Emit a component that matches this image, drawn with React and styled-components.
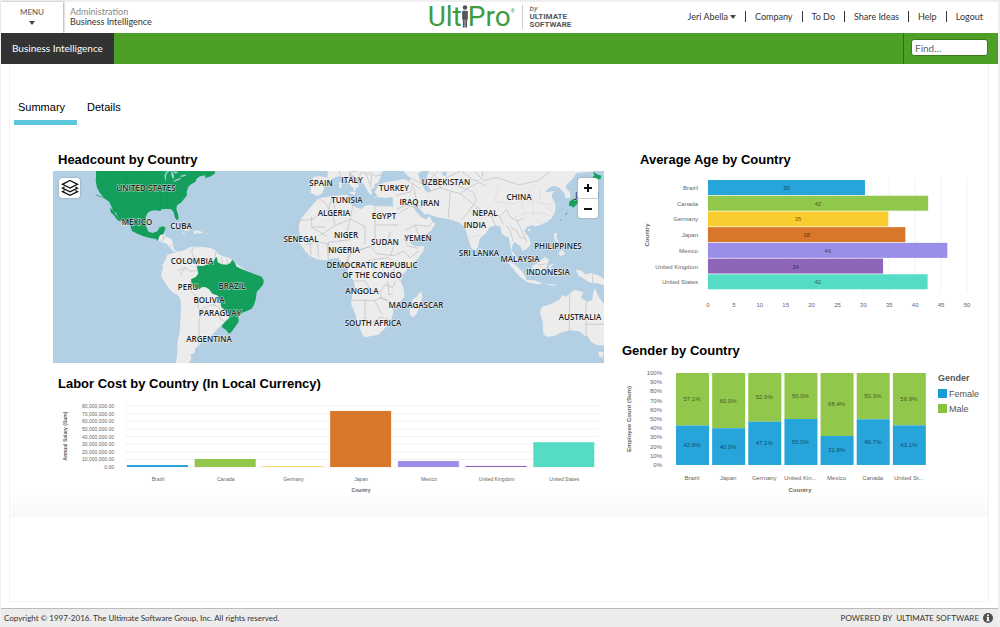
import React, { useState } from "react";
import styled, { createGlobalStyle } from "styled-components";

const COUNTRIES = [
  { name: "Brazil", color: "#27a5db", age: 30.3, ageLabel: "30", cost: 2.6 },
  { name: "Canada", color: "#91c84b", age: 42.5, ageLabel: "42", cost: 10.5 },
  { name: "Germany", color: "#f9cd2f", age: 34.8, ageLabel: "35", cost: 0.9 },
  { name: "Japan", color: "#d8772a", age: 38.1, ageLabel: "38", cost: 73.5 },
  { name: "Mexico", color: "#998fe8", age: 46.2, ageLabel: "46", cost: 7.8 },
  { name: "United Kingdom", color: "#8d66ba", age: 33.8, ageLabel: "34", cost: 1.4 },
  { name: "United States", color: "#54dcc4", age: 42.4, ageLabel: "42", cost: 32.5 },
];

const GENDER = [
  { name: "Brazil", male: 57.1, female: 42.9 },
  { name: "Japan", male: 60.0, female: 40.0 },
  { name: "Germany", male: 52.9, female: 47.1 },
  { name: "United Kin...", male: 50.0, female: 50.0 },
  { name: "Mexico", male: 68.4, female: 31.6 },
  { name: "Canada", male: 50.3, female: 49.7 },
  { name: "United St...", male: 56.9, female: 43.1 },
];

const LINKS = ["Company", "To Do", "Share Ideas", "Help", "Logout"];

const MAP_LABELS = [
  ["UNITED STATES", 93, 20],
  ["MEXICO", 84, 54],
  ["CUBA", 128, 58],
  ["COLOMBIA", 139, 93],
  ["PERU", 135, 119],
  ["BRAZIL", 179, 118],
  ["BOLIVIA", 156, 132],
  ["PARAGUAY", 167, 145],
  ["ARGENTINA", 156, 171],
  ["SPAIN", 268, 15],
  ["ITALY", 299, 12],
  ["TURKEY", 341, 20],
  ["UZBEKISTAN", 393, 14],
  ["CHINA", 466, 29],
  ["TUNISIA", 294, 32],
  ["IRAQ", 356, 34],
  ["IRAN", 377, 35],
  ["ALGERIA", 281, 45],
  ["EGYPT", 331, 48],
  ["NEPAL", 432, 45],
  ["INDIA", 422, 57],
  ["SENEGAL", 248, 71],
  ["NIGER", 293, 67],
  ["SUDAN", 332, 74],
  ["YEMEN", 365, 70],
  ["NIGERIA", 291, 82],
  ["SRI LANKA", 426, 85],
  ["PHILIPPINES", 505, 78],
  ["MALAYSIA", 467, 91],
  ["INDONESIA", 495, 104],
  ["DEMOCRATIC REPUBLIC", 319, 97],
  ["OF THE CONGO", 319, 107],
  ["ANGOLA", 309, 123],
  ["MADAGASCAR", 363, 137],
  ["SOUTH AFRICA", 320, 155],
  ["AUSTRALIA", 527, 149],
  ["JAPAN", 534, 27],
];

const Logo = () => (
  <Brand>
    <Wordmark>
      Ult
      <svg width="6" height="23" viewBox="0 0 6 24" aria-hidden="true">
        <circle cx="3" cy="2.6" r="2.4" fill="#55565a" />
        <path
          d="M1 6h4a1 1 0 0 1 1 1v8h-.8v8.500H3.300V15h-.6v8.500H.8V15H0V7a1 1 0 0 1 1-1z"
          fill="#55565a"
        />
      </svg>
      Pro
      <Registered>®</Registered>
    </Wordmark>
    <Byline>
      <em>by</em>
      <b>ULTIMATE</b>
      <b>SOFTWARE</b>
    </Byline>
  </Brand>
);

const WorldMap = () => {
  const [zoom, setZoom] = useState(1);

  return (
    <MapFrame>
      <MapSvg viewBox="0 0 551 192" role="img" aria-label="Headcount map">
        <g transform={`translate(275 96) scale(${zoom}) translate(-275 -96)`}>
          <g transform="scale(.33333) translate(-9 -78)">
            <Land d="M405 315l10-7 17-5 8 5 10-3 30 3 17 8 8 12 15 6 20 6 12 12 60 40-30 90-60 50-34 36-8 8-10 2-15 10-7 15-13 7-1 13-14 7 5 10-10 15-10 12h-33l7-18 2-20 2-40 6-28 3-52 1-40-6-15-23-15-15-20-12-18-4-14 6-18-2-10 10-15 5-15z" />
            <Land d="M323 286l4-18 16-2 4 9 18 6 4 19 3 14 13 6 13-3 8 7-7 3-13-3-14-4-14-13-8-11-18-6z" />
            <Land d="M355 237l14 0 18 6 22 9 16 4-20 1-12-7-24-8zM431 258l10-2 19 6-8 3-20 2zM397 262l10 2-6 3zM466 263l8 1-4 2z" />
            <Active d="M138 72v22l-1 12 4 22 9 17 13 15 14 10 5 10 9 20 8 4 4 12 9 8-1 6-11-7-8-12-9-8-4-15 8 6 14 18 11 14 18 8 11 8 5 16 16 8 18 8 20 5 18 3 5 6 7-18 10-2 7-20-7-4-11 3-7 12-14 5-12-4-6-10-3-16v-17l5-12 9-7 14-2 16 2 4-5 14-1 15 1 7 9 4 16 6 8 5-3-2-15-5-15 2-12 12-8 12-15 6-7-1-10 5-16 9-8 12-6 4-10 10-7 16-3-1 9 18-6 12-9v-6z" />
            <Active d="M440 362l20 1 18-8 12-5 6-12 5-1 2 15 12 6 15 1 10-4 7-11 8 10 5 11 15 7 20 8 20 8 20 7 6 10-1 13-10 12-10 12-2 18-6 20-8 12-14 6-15 6-10 11 1 15-10 15-12 16-7 5-8-10-12-9-2-4 12-14 12-11-5-12-7-7-13-13-3-15-10-20-14-5-10-13-10-6-10-1-10 7-10-2-13-18-1-10 14-7 8-10-3-13z" />
            <Border d="M432 303l-7 15 5 18 13 8 1 22M384 376l22-8 14 10 20 0M406 368l-16 22M424 412l-8 20 22 22 8 14-2 20 10 8-8 40 2 50-8 50-1 40M502 450l-4 25-20 8-24 8M488 480l16 4 10 12 16 18M512 498l-2 24 14 6M498 316l-2 20M515 336l2 20M530 340l2 17M335 268l6 12-8 8M345 275l-8 12M366 300l-8 5M443 260l-1 8" />
            <DarkBorder d="M138 150l34 12 30 4 16 12 18 8 14 18 20 8 18 6M178 78l-2 70M230 78l2 84M280 78l6 80M172 110h150M330 100l6 92M350 110l4 80M370 112l2 60" />
            <Lake d="M352 82q-8 10-5 24l-3-14 6-12 8-2 4-2M364 79q10 8 6 22l-4-8zM371 109q12-2 22-9-10 1-22 9zM392 94q10-5 16-4-6 5-16 4zM370 80l14 2-8 3z" />
          </g>
          <g transform="scale(.33333) translate(816 -78)">
            <Land d="M-20 160l20-3 22-5 46-3 4 12-4 12 12 6 16 9 14 4 8-9 17-4 20 5h45l8 6 4 18 10 17 6 20 10 15 4 18 13 14 7 8 18 5 18-3-2 14-16 24-18 20-18 16-12 15-4 20 8 20 2 25-18 20-15 10v15l-5 20-10 15-15 20-15 13-20 4-22 4-8-11-6-20-9-25-7-20-10-25 4-25 8-25-4-17-11-16-7-12 2-18-6-12H50l-10-12-20 2-20 5-25-3-20-10-15-15-10-15-10-15 5-15-5-30 10-25 25-30z" />
            <Land d="M288 438l4 17-7 25-9 25-10 11-10-4-2-17 8-15v-15l13-10z" />
            <Land d="M-35 95l20-1 23 4V72h168l-6 13-5 15-5 12-10 6-2 10-10 4 4 13-7 5-9-15-8-15-13-15-20-13-13-10v10l13 13 10 10 9 7-10 8-6 10-4 0 3-8-7-7-10-12-15-15-12-5-18 6-10 9-15 12-8 25-15 8-10-5-10-4 1-24zM75 140l17 2-3 8-14-5zM42 112l8 0v16l-7 3zM146 155l14 2-12 2z" />
            <Land d="M163 118l17-6 25-4 20-4 15-2 12 6 6-8-13-10-10-12V72h575v8l-55 4-15 20-15 15-3 10 13 12 1 17-14 2-4-15-8-10-10-8-14-5-14 7-12 12 12-1 18-2-10 10 2 12 10 20-2 20-10 20-15 12-20 8-15 5-8-5-16 6-8 12 13 18 7 20-12 15-14 8-4-13-12-10-8-6-6 12-2 14 9 12 12 20-8-2-12-20-6-25-4-25-12-3-10-10-2-17-13-5-20 5-10 17-20 18-5 25-10 13-10-10-8-23-7-25-5-15-15-13-30-10-25-4-25-6-14-6-11 1-15-16-15-16-5 6 10 19 14 15 16 7 10-10 5 13 12 10-12 20-20 15-25 12-23 10-10-12-10-25-12-20-12-27-2-16-2-17 1-15-7-5-18 3-20-3-10-15z" />
            <Land d="M465 308l8 9-6 10-4-6zM608 255l10-4-4 9zM686 265l9-2-1 16 8 12-12-3zM704 318l10-3 6 12-12 6-8-6zM700 296l8 2-2 8-5-4zM676 315l12-14-8 14zM540 342l16 6 18 14 18 18 12 20-3 8-18-14-20-24zM600 404l28 2 24 8-10 4-36-6zM622 362l18-9 20-18 12 10-7 20-10 20-24 2-9-14zM672 360l18-3-14 8 8 16-8-8-4 14zM658 416l20 1 18 3-12 2zM752 375l16 1 12 12 18-4 28 10 20 14v17l-28-10-22-2-20-12-14-8z" />
            <Land d="M648 490l8-6 24-8 22-11 10-14 12 4 11-12 14-9 26 8-7 16 18 12 15-4 4-24 5-12 8 20 9 14 12 16v122l-24-2-18-10-8-16-11-2-15-13-30-3-26 7-20 11-22 1-10-8-2-38-8-26zM820 620l16 2-4 16-10-6z" />
            <Active d="M804 79l12 9 13 4-2 9-12 3-13-8 6-4zM733 170l14-10 12 2-2 14-12 12-5-4-8-2zM800 106l6 20-10 26-30 14-6-6 20-14 14-20zM721 208l8-8-6 10zM705 226l5-3-4 5z" />
            <Water d="M279 86l14-9h20l-8 18 3 26 10 14-6 8-13-8-8-18-8-18zM352 80l14 2-4 12-10-4zM470 76l5 10-3 12z" />
            <Border d="M-20 160l20 12 12 20-52 32-40 2v22h-12M-40 216v30h42M-40 246l46 28M12 192l8-38M20 152l10 40-6 20 6 30 46-20 8-44M30 242l-46 30M76 222l44 22v54M76 222l-10 38 10 24-66 8 4 42M150 184v56h70M150 240v40l-12 24-60 18-14 30M66 352l10-28 60-20 20 22 50 6 30-14 20 20 26-20M196 260l-6 24 16 20-10 30M236 280l12 22 30 8M-60 300l40-10 26 6 4 46M-44 286l2 44M-22 290l2 50M70 362l40 6 20-22 60-8 20 16-6 36 32 24M80 408h40l20 30h28l14-20 20 10 10-20M82 466h70l16-10 20 10M120 468v50l-20 24M120 518l20 16 28-18 26 10M150 468l20 38M168 440l-2 20 30 10 8 24M188 410l4 40 12-4" />
            <Border d="M10 100l-14 40M48 92l-6-14M72 82l24-4M100 100l10-20 14 8 10 28M120 82l20 10-4 34M134 80l18 14 20-6M240 102l24 14-6 24-44 12M258 100l40 20M264 116l24 18M266 128l12 50 14 12M216 192l30-12 30 10M220 206l30-18M240 256l30-16 42 4 14-18M270 240l14 40M318 100l22-22M312 140l34-12 30 10-6 80M318 106l30 22M320 82l40 40 30-4 30 14 44-20 20 12M376 138l30 8 20-14 20 10 8 24-24 36-20 20M346 128l18-30 40-18M412 80l30 24 20 4M450 82l26 24 40-8 66 22 60-14 30-26M406 146l20 16 24 20 34 24 38 4 12 28M452 190l30 22 32 4M500 218l14 26M530 210l14-16 14 24 20 10 20-8M544 240l12 18 8 30M556 246l20 12 6 18 16 4M576 228l20 40 10 24M734 442l-1 116M783 470v104M783 538h55M803 386v28M640 360l24-4" />
            <PaleBorder d="M560 132l20 20 30-10 24-22M560 178l40-14 40 10 46 6M590 176l8 30-26 10M620 150l6 60 20 26M646 130l-2 40 40 30M600 206l50-2 30 10M520 120l-10 50 50 8M430 200l40 20M432 250l36-14M426 280l40-10" />
          </g>
          {MAP_LABELS.map(([label, x, y]) => (
            <MapLabel key={label} x={x} y={y}>
              {label}
            </MapLabel>
          ))}
        </g>
      </MapSvg>
      <LayersButton type="button" aria-label="Layers">
        <svg width="18" height="18" viewBox="0 0 18 18" fill="none" stroke="#111">
          <path d="M9 1.500l7.500 3.800L9 9 1.500 5.300z" strokeWidth="1.300" />
          <path d="M3.500 8L1.500 9.100 9 12.800l7.500-3.700-2-1.100" strokeWidth="1.300" />
          <path d="M3.500 11.500l-2 1.100L9 16.300l7.500-3.700-2-1.100" strokeWidth="1.300" />
        </svg>
      </LayersButton>
      <ZoomControl>
        <ZoomButton
          type="button"
          aria-label="Zoom in"
          onClick={() => setZoom((z) => Math.min(z * 2, 8))}
        >
          <svg width="8" height="8" viewBox="0 0 8 8" stroke="#111" strokeWidth="2">
            <path d="M0 4h8M4 0v8" />
          </svg>
        </ZoomButton>
        <ZoomButton
          type="button"
          aria-label="Zoom out"
          onClick={() => setZoom((z) => Math.max(z / 2, 1))}
        >
          <svg width="8" height="8" viewBox="0 0 8 8" stroke="#111" strokeWidth="2">
            <path d="M0 4h8" />
          </svg>
        </ZoomButton>
      </ZoomControl>
    </MapFrame>
  );
};

const LaborCostChart = () => {
  const base = 72;
  const scale = 61 / 80;
  const step = 474 / 7;

  return (
    <ChartSvg viewBox="0 0 551 102" role="img" aria-label="Labor cost">
      <AxisTitle $small transform="translate(14 41) rotate(-90)">
        Annual Salary (Sum)
      </AxisTitle>
      {[0, 10, 20, 30, 40, 50, 60, 70, 80].map((tick) => (
        <g key={tick}>
          <GridLine x1="72" x2="545" y1={base - tick * scale} y2={base - tick * scale} />
          <Tick $small $end x="61" y={base + 2 - tick * scale}>
            {tick ? `${tick},000,000.00` : "0.00"}
          </Tick>
        </g>
      ))}
      {COUNTRIES.map((c, i) => (
        <g key={c.name}>
          <rect
            x={74 + i * step}
            y={base - c.cost * scale}
            width="61"
            height={c.cost * scale}
            fill={c.color}
          />
          <Tick $small x={105 + i * step} y="86">
            {c.name}
          </Tick>
        </g>
      ))}
      <AxisTitle $small x="308" y="97">
        Country
      </AxisTitle>
    </ChartSvg>
  );
};

const AverageAgeChart = () => {
  const left = 86;
  const scale = 259 / 50;
  const step = 110 / 7;

  return (
    <ChartSvg viewBox="0 0 358 159" role="img" aria-label="Average age">
      <AxisTitle transform="translate(27 64) rotate(-90)">Country</AxisTitle>
      {[0, 5, 10, 15, 20, 25, 30, 35, 40, 45, 50].map((tick) => (
        <g key={tick}>
          <GridLine x1={left + tick * scale} x2={left + tick * scale} y1="7" y2="121" />
          <Tick x={left + tick * scale} y="136">
            {tick}
          </Tick>
        </g>
      ))}
      {COUNTRIES.map((c, i) => (
        <g key={c.name}>
          <rect
            x={left}
            y={9 + i * step}
            width={c.age * scale}
            height="15"
            fill={c.color}
          />
          <Tick $end x="76" y={19 + i * step}>
            {c.name}
          </Tick>
          <Value x={left + (c.age * scale) / 2} y={19 + i * step}>
            {c.ageLabel}
          </Value>
        </g>
      ))}
    </ChartSvg>
  );
};

const GenderChart = () => {
  const top = 11;
  const height = 92;
  const step = 253 / 7;

  return (
    <ChartSvg viewBox="0 0 358 135" role="img" aria-label="Gender split">
      <AxisTitle transform="translate(9 57) rotate(-90)">
        Employee Count (Sum)
      </AxisTitle>
      {[0, 10, 20, 30, 40, 50, 60, 70, 80, 90, 100].map((tick) => (
        <Tick key={tick} $end x="40" y={top + height + 2 - tick * 0.92}>
          {tick}%
        </Tick>
      ))}
      {GENDER.map((g, i) => {
        const split = top + (height * g.male) / 100;
        const x = 54 + i * step;
        return (
          <g key={g.name}>
            <rect x={x} y={top} width="33" height={split - top} fill="#91c84b" />
            <rect x={x} y={split} width="33" height={top + height - split} fill="#27a5db" />
            <Value x={x + 16} y={(top + split) / 2 + 2}>
              {g.male.toFixed(1)}%
            </Value>
            <Value x={x + 16} y={(split + top + height) / 2 + 2}>
              {g.female.toFixed(1)}%
            </Value>
            <Tick x={x + 16} y="118">
              {g.name}
            </Tick>
          </g>
        );
      })}
      <AxisTitle x="178" y="130">
        Country
      </AxisTitle>
      <LegendText $bold x="316" y="19">
        Gender
      </LegendText>
      <rect x="316" y="27" width="9" height="9" fill="#1a9bd4" />
      <LegendText x="327" y="35">
        Female
      </LegendText>
      <rect x="316" y="42" width="9" height="9" fill="#86c440" />
      <LegendText x="327" y="50">
        Male
      </LegendText>
    </ChartSvg>
  );
};

const App = () => {
  const [tab, setTab] = useState("Summary");

  return (
    <>
      <GlobalStyle />
      <Page>
        <Header>
          <HeaderLeft>
            <MenuButton type="button">
              MENU
              <Caret />
            </MenuButton>
            <Breadcrumb>
              <span>Administration</span>
              <strong>Business Intelligence</strong>
            </Breadcrumb>
          </HeaderLeft>
          <Logo />
          <UserNav>
            <UserButton type="button">
              Jeri Abella
              <Caret />
            </UserButton>
            {LINKS.map((link) => (
              <NavLink key={link} href="#">
                {link}
              </NavLink>
            ))}
          </UserNav>
        </Header>
        <NavBar>
          <CurrentPage href="#">Business Intelligence</CurrentPage>
          <SearchBox>
            <SearchInput type="text" aria-label="Find" placeholder="Find..." />
          </SearchBox>
        </NavBar>
        <Panel>
          <Tabs>
            {["Summary", "Details"].map((name) => (
              <Tab
                key={name}
                type="button"
                $active={tab === name}
                onClick={() => setTab(name)}
              >
                {name}
              </Tab>
            ))}
          </Tabs>
          <Dashboard>
            <Column>
              <Card>
                <CardTitle $indent={5}>Headcount by Country</CardTitle>
                <WorldMap />
              </Card>
              <Card>
                <CardTitle $indent={5}>Labor Cost by Country (In Local Currency)</CardTitle>
                <LaborCostChart />
              </Card>
            </Column>
            <Column>
              <Card>
                <CardTitle $indent={18}>Average Age by Country</CardTitle>
                <AverageAgeChart />
              </Card>
              <Card>
                <CardTitle>Gender by Country</CardTitle>
                <GenderChart />
              </Card>
            </Column>
          </Dashboard>
        </Panel>
        <Footer>
          <span>
            Copyright © 1997-2016. The Ultimate Software Group, Inc. All rights reserved.
          </span>
          <Powered>
            POWERED BY&nbsp; ULTIMATE SOFTWARE
            <svg width="10" height="10" viewBox="0 0 10 10" aria-hidden="true">
              <circle cx="5" cy="5" r="5" fill="#4d4d4d" />
              <path d="M4 1.600h2v1.600H4zM3.400 4H6v3.200h.7v1.100H3.400V7.200H4V5.100h-.6z" fill="#eee" />
            </svg>
          </Powered>
        </Footer>
      </Page>
    </>
  );
};

export default App;

const GlobalStyle = createGlobalStyle`
  * {
    box-sizing: border-box;
  }

  body {
    margin: 0;
    background-color: #fff;
    font-family: Lato, "Open Sans", sans-serif;
    color: #333;
  }

  button {
    border: none;
    background: none;
    padding: 0;
    font-family: inherit;
    color: inherit;
    cursor: pointer;
  }

  a {
    color: inherit;
    text-decoration: none;
  }
`;

const Page = styled.div`
  display: flex;
  flex-direction: column;
  min-height: 100vh;
  border: solid #efefef;
  border-width: 2px 2px 0 1px;
`;

const Header = styled.header`
  display: grid;
  grid-template-columns: 1fr auto 1fr;
  height: 31px;
`;

const HeaderLeft = styled.div`
  display: flex;
`;

const MenuButton = styled.button`
  display: flex;
  flex-direction: column;
  align-items: center;
  justify-content: center;
  gap: 4px;
  width: 62px;
  padding-bottom: 2px;
  font-size: 8px;
  line-height: 9px;
  color: #555;
  box-shadow: 1px 0 2px #aaa;
`;

const Caret = styled.span`
  border: 3px solid transparent;
  border-top: 4px solid #444;
  border-bottom: none;
`;

const Breadcrumb = styled.div`
  display: flex;
  flex-direction: column;
  justify-content: center;
  padding: 0 0 2px 7px;
  font-size: 9px;
  line-height: 10px;

  span {
    color: #888;
  }

  strong {
    font-weight: 400;
  }
`;

const Brand = styled.div`
  display: flex;
  align-items: center;
  padding-bottom: 2px;
`;

const Wordmark = styled.div`
  display: flex;
  align-items: center;
  padding-right: 7px;
  font-family: Roboto, sans-serif;
  font-size: 28px;
  line-height: 28px;
  color: #3f9b3f;
`;

const Registered = styled.sup`
  align-self: flex-start;
  font-size: 5px;
  line-height: 16px;
`;

const Byline = styled.div`
  display: flex;
  flex-direction: column;
  padding-left: 7px;
  border-left: 1px solid #ccc;
  font-family: Roboto, sans-serif;
  font-size: 8px;
  line-height: 8px;
  color: #55565a;
`;

const UserNav = styled.nav`
  display: flex;
  align-items: center;
  justify-content: flex-end;
  padding: 0 15px 2px 0;
  font-size: 9px;
  line-height: 11px;
`;

const UserButton = styled.button`
  display: flex;
  align-items: center;
  gap: 2px;
  padding-right: 9px;
  font-size: 9px;
  line-height: 11px;
`;

const NavLink = styled.a`
  padding: 0 9px;
  border-left: 1px solid #333;

  &:last-child {
    padding-right: 0;
  }
`;

const NavBar = styled.div`
  display: flex;
  justify-content: space-between;
  height: 31px;
  background-color: #4e9f27;
`;

const CurrentPage = styled.a`
  display: flex;
  align-items: center;
  padding: 0 11px 2px;
  background-color: #333;
  color: #fff;
  font-size: 10px;
`;

const SearchBox = styled.div`
  display: flex;
  align-items: center;
  padding: 0 10px 2px 7px;
  border-left: 1px solid #2f6e14;
`;

const SearchInput = styled.input`
  width: 77px;
  height: 17px;
  padding: 0 3px;
  border: 1px solid #3b7a1d;
  border-radius: 3px;
  background-color: #fff;
  font-family: inherit;
  font-size: 10px;

  &::placeholder {
    color: #666;
  }
`;

const Panel = styled.main`
  flex: 1;
  margin: 0 9px 6px 8px;
  padding-top: 34px;
  border: 1px solid #f2f2f2;
  border-top: none;
`;

const Tabs = styled.div`
  display: flex;
  gap: 6px;
  padding-left: 4px;
`;

const Tab = styled.button`
  padding: 0 12px 4px 4px;
  border-bottom: 5px solid ${({ $active }) => ($active ? "#5bc8de" : "transparent")};
  font-family: "Liberation Sans", Arial, sans-serif;
  font-size: 11px;
  line-height: 18px;
  color: #000;
`;

const Dashboard = styled.div`
  display: grid;
  grid-template-columns: minmax(0, 551fr) minmax(0, 358fr);
  gap: 18px;
  padding: 27px 8px 20px 43px;
  background: linear-gradient(to top, #f8f8f8, #fff 26px);
`;

const Column = styled.div`
  display: flex;
  flex-direction: column;
  gap: 13px;
`;

const Card = styled.section`
  display: flex;
  flex-direction: column;
  gap: 3px;
`;

const CardTitle = styled.h2`
  margin: 0;
  padding-left: ${({ $indent = 0 }) => $indent}px;
  font-family: "Liberation Sans", Arial, sans-serif;
  font-size: 13px;
  line-height: 16px;
  color: #000;
`;

const MapFrame = styled.div`
  position: relative;
`;

const MapSvg = styled.svg`
  display: block;
  width: 100%;
  overflow: hidden;
  background-color: #b3cfe4;
`;

const Land = styled.path`
  fill: #ececec;
`;

const Active = styled.path`
  fill: #14a05c;
`;

const Water = styled.path`
  fill: #b3cfe4;
`;

const Lake = styled(Water)`
  stroke: #b3cfe4;
  stroke-width: 2px;
`;

const Border = styled.path`
  fill: none;
  stroke: #bdbdc0;
  stroke-width: 2px;
  stroke-linejoin: round;
`;

const PaleBorder = styled(Border)`
  stroke: #d9d9da;
`;

const DarkBorder = styled(Border)`
  stroke: #10965a;
`;

const MapLabel = styled.text`
  font-family: "Open Sans", "Noto Sans", sans-serif;
  font-size: 8px;
  font-weight: 600;
  text-anchor: middle;
  fill: #222;
  stroke: #fff;
  stroke-width: 1px;
  stroke-opacity: 0.7;
  paint-order: stroke;
`;

const LayersButton = styled.button`
  position: absolute;
  top: 7px;
  left: 6px;
  display: flex;
  align-items: center;
  justify-content: center;
  width: 21px;
  height: 20px;
  border-radius: 3px;
  background-color: #fff;
  box-shadow: 0 0 2px #888;
`;

const ZoomControl = styled.div`
  position: absolute;
  top: 7px;
  right: 6px;
  display: flex;
  flex-direction: column;
  border-radius: 3px;
  background-color: #fff;
  box-shadow: 0 0 2px #888;
`;

const ZoomButton = styled.button`
  display: flex;
  align-items: center;
  justify-content: center;
  width: 20px;
  height: 20px;

  & + & {
    border-top: 1px solid #ccc;
  }
`;

const ChartSvg = styled.svg`
  display: block;
  width: 100%;
  font-family: "Liberation Sans", Arial, sans-serif;
`;

const GridLine = styled.line`
  stroke: #f2f2f2;
`;

const Tick = styled.text`
  font-size: ${({ $small }) => ($small ? 5 : 6)}px;
  text-anchor: ${({ $end }) => ($end ? "end" : "middle")};
  fill: #666;
`;

const AxisTitle = styled.text`
  font-size: ${({ $small }) => ($small ? 5 : 6)}px;
  font-weight: 700;
  text-anchor: middle;
  fill: #666;
`;

const Value = styled.text`
  font-size: 6px;
  text-anchor: middle;
  fill: rgba(0, 0, 0, 0.6);
`;

const LegendText = styled.text`
  font-size: 9px;
  font-weight: ${({ $bold }) => ($bold ? 700 : 400)};
  fill: #555;
`;

const Footer = styled.footer`
  display: flex;
  align-items: center;
  justify-content: space-between;
  height: 19px;
  padding: 0 5px 0 3px;
  border-top: 1px solid #bbb;
  background-color: #ececec;
  font-size: 8px;
`;

const Powered = styled.span`
  display: flex;
  align-items: center;
  gap: 4px;
`;
